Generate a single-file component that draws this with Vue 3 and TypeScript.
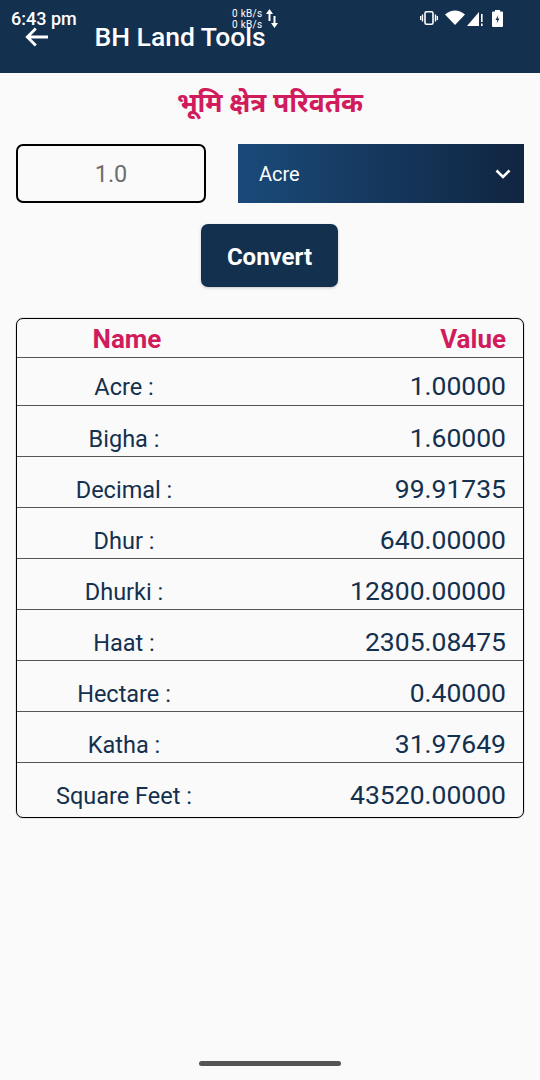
<script setup lang="ts">
const rows: { name: string; value: string; h: number; pb: number }[] = [
  { name: 'Acre :', value: '1.00000', h: 48, pb: 3 },
  { name: 'Bigha :', value: '1.60000', h: 51, pb: 2 },
  { name: 'Decimal :', value: '99.91735', h: 51, pb: 2 },
  { name: 'Dhur :', value: '640.00000', h: 51, pb: 2 },
  { name: 'Dhurki :', value: '12800.00000', h: 51, pb: 2 },
  { name: 'Haat :', value: '2305.08475', h: 51, pb: 2 },
  { name: 'Hectare :', value: '0.40000', h: 51, pb: 2 },
  { name: 'Katha :', value: '31.97649', h: 51, pb: 2 },
  { name: 'Square Feet :', value: '43520.00000', h: 55, pb: 6 },
]
</script>

<template>
  <div class="page">
    <header class="appbar">
      <div class="status">
        <span class="time">6:43 pm</span>
        <div class="speed">
          <div class="speed-text"><span>0 kB/s</span><span>0 kB/s</span></div>
          <svg class="speed-icon" viewBox="0 0 12 19" width="12" height="19">
            <path d="M3.500 12V3" fill="none" stroke="#fff" stroke-width="2" />
            <path d="M0 5 3.500 0 7 5Z" fill="#fff" />
            <path d="M8.500 7v9" fill="none" stroke="#fff" stroke-width="2" />
            <path d="M5 14l3.500 5 3.500-5Z" fill="#fff" />
          </svg>
        </div>
        <div class="sys">
          <svg class="i-vib" viewBox="0 0 18 14" width="18" height="14">
            <rect x="5" y="0.800" width="8" height="12.400" rx="1.500" fill="none" stroke="#fff" stroke-width="1.600" />
            <path d="M2.500 3.500v7M0.600 5v4M15.500 3.500v7M17.400 5v4" stroke="#fff" stroke-width="1.400" />
          </svg>
          <svg class="i-wifi" viewBox="0 0 20 15" width="20" height="15">
            <path d="M0 4.500Q10-3.500 20 4.500L10 15Z" fill="#fff" />
          </svg>
          <svg class="i-sig" viewBox="0 0 16 16" width="16" height="16">
            <path d="M0 16 12 2V16Z" fill="#fff" />
            <path d="M14.800 4v8M14.800 13.500v2.500" stroke="#fff" stroke-width="1.600" />
          </svg>
          <svg class="i-bat" viewBox="0 0 11 17" width="11" height="17">
            <path d="M3 0h5v1.500h2a1 1 0 0 1 1 1V16a1 1 0 0 1-1 1H1a1 1 0 0 1-1-1V2.500a1 1 0 0 1 1-1h2Z" fill="#fff" />
            <path d="M6.300 5 3.500 10h1.800l-.6 3.500 2.800-5H5.700Z" fill="#14304f" />
          </svg>
        </div>
      </div>
      <div class="bar">
        <svg class="back" viewBox="0 0 24 20" width="24" height="20">
          <path d="M23 10H3M10.800 1.500 2.300 10l8.500 8.500" fill="none" stroke="#fff" stroke-width="2.800" />
        </svg>
        <span class="title">BH Land Tools</span>
      </div>
    </header>

    <main class="content">
      <h1 class="heading">भूमि क्षेत्र परिवर्तक</h1>
      <div class="form">
        <div class="input">1.0</div>
        <div class="select">
          <span>Acre</span>
          <svg viewBox="0 0 16 10" width="16" height="10">
            <path d="M1.500 1.500 8 8l6.500-6.500" fill="none" stroke="#fff" stroke-width="2.600" />
          </svg>
        </div>
      </div>
      <div class="actions"><button class="convert">Convert</button></div>
      <div class="table">
        <div class="row head">
          <span class="name">Name</span>
          <span class="value">Value</span>
        </div>
        <div
          v-for="r in rows"
          :key="r.name"
          class="row"
          :style="{ height: r.h + 'px', paddingBottom: r.pb + 'px' }"
        >
          <span class="name">{{ r.name }}</span>
          <span class="value">{{ r.value }}</span>
        </div>
      </div>
    </main>
    <div class="home"></div>
  </div>
</template>

<style>
html, body { margin: 0; background: #fafafa; }
</style>

<style scoped>
.page {
  position: relative;
  width: 540px;
  height: 1080px;
  background: #fafafa;
  font-family: Roboto, "Noto Sans", sans-serif;
  overflow: hidden;
  color: #14304f;
}
.appbar {
  position: relative;
  height: 73px;
  background: #14304f;
  color: #fff;
}
.status {
  position: absolute;
  top: 0;
  left: 0;
  right: 0;
  height: 36px;
}
.time {
  position: absolute;
  left: 11px;
  top: 8px;
  font-size: 18px;
  line-height: 21px;
  font-weight: 500;
}
.speed {
  position: absolute;
  left: 232px;
  top: 8px;
  display: flex;
  align-items: flex-start;
  gap: 3px;
}
.speed-text {
  display: flex;
  flex-direction: column;
  font-size: 10px;
  line-height: 11px;
  letter-spacing: 0.3px;
}
.speed-icon {
  margin-top: 1px;
}
.sys {
  position: absolute;
  left: 420px;
  top: 10px;
  display: flex;
  align-items: flex-start;
  gap: 0;
}
.i-vib { margin-top: 1px; }
.i-wifi { margin-left: 7px; }
.i-sig { margin-left: 2px; }
.i-bat { margin-left: 9px; }
.bar {
  display: flex;
  align-items: center;
  height: 73px;
  padding-left: 25px;
  box-sizing: border-box;
}
.back {
  margin-right: 45.500px;
}
.title {
  font-size: 26.500px;
  font-weight: 500;
}
.content {
  padding: 13px 16px 0;
}
.heading {
  margin: 0;
  height: 33px;
  line-height: 33px;
  text-align: center;
  font-size: 26.500px;
  font-weight: 700;
  color: #d01c5c;
}
.form {
  display: flex;
  gap: 32px;
  margin-top: 25px;
}
.input {
  width: 190px;
  height: 59px;
  box-sizing: border-box;
  border: 2px solid #000;
  border-radius: 7px;
  display: flex;
  align-items: center;
  justify-content: center;
  padding-top: 1px;
  font-size: 23.500px;
  color: #6d6d6d;
}
.select {
  width: 286px;
  height: 59px;
  box-sizing: border-box;
  padding: 0 13px 0 21px;
  display: flex;
  align-items: center;
  justify-content: space-between;
  background: linear-gradient(90deg, #1a4a7a, #102540);
  color: #fff;
  font-size: 20px;
}
.actions {
  display: flex;
  justify-content: center;
  margin-top: 21px;
  padding-right: 1px;
}
.convert {
  width: 137px;
  height: 63px;
  border: 0;
  border-radius: 7px;
  padding: 2px 0 0;
  background: #14304f;
  color: #fff;
  font-family: inherit;
  font-size: 24px;
  font-weight: 700;
  box-shadow: 0 1px 3px rgba(0, 0, 0, 0.2);
}
.table {
  margin-top: 31px;
  width: 508px;
  box-sizing: border-box;
  border: 1px solid #000;
  border-radius: 7px;
  box-shadow: 0 0 1px rgba(0, 0, 0, 0.8);
}
.row {
  display: flex;
  align-items: flex-end;
  justify-content: space-between;
  box-sizing: border-box;
  padding-right: 17px;
  border-top: 1px solid #555;
  font-size: 26.500px;
  line-height: 30px;
}
.row .name {
  width: 214px;
  text-align: center;
  font-size: 23.500px;
}
.row .value {
  margin-bottom: 1px;
}
.head {
  height: 38px;
  border-top: 0;
  padding-bottom: 3px;
  font-weight: 700;
  color: #d01c5c;
  font-size: 26px;
}
.head .name {
  font-size: 26px;
  padding-left: 3px;
}
.head .value {
  margin-bottom: 0;
}
.home {
  position: absolute;
  left: 199px;
  top: 1061px;
  width: 142px;
  height: 5px;
  border-radius: 3px;
  background: #555;
}
</style>
